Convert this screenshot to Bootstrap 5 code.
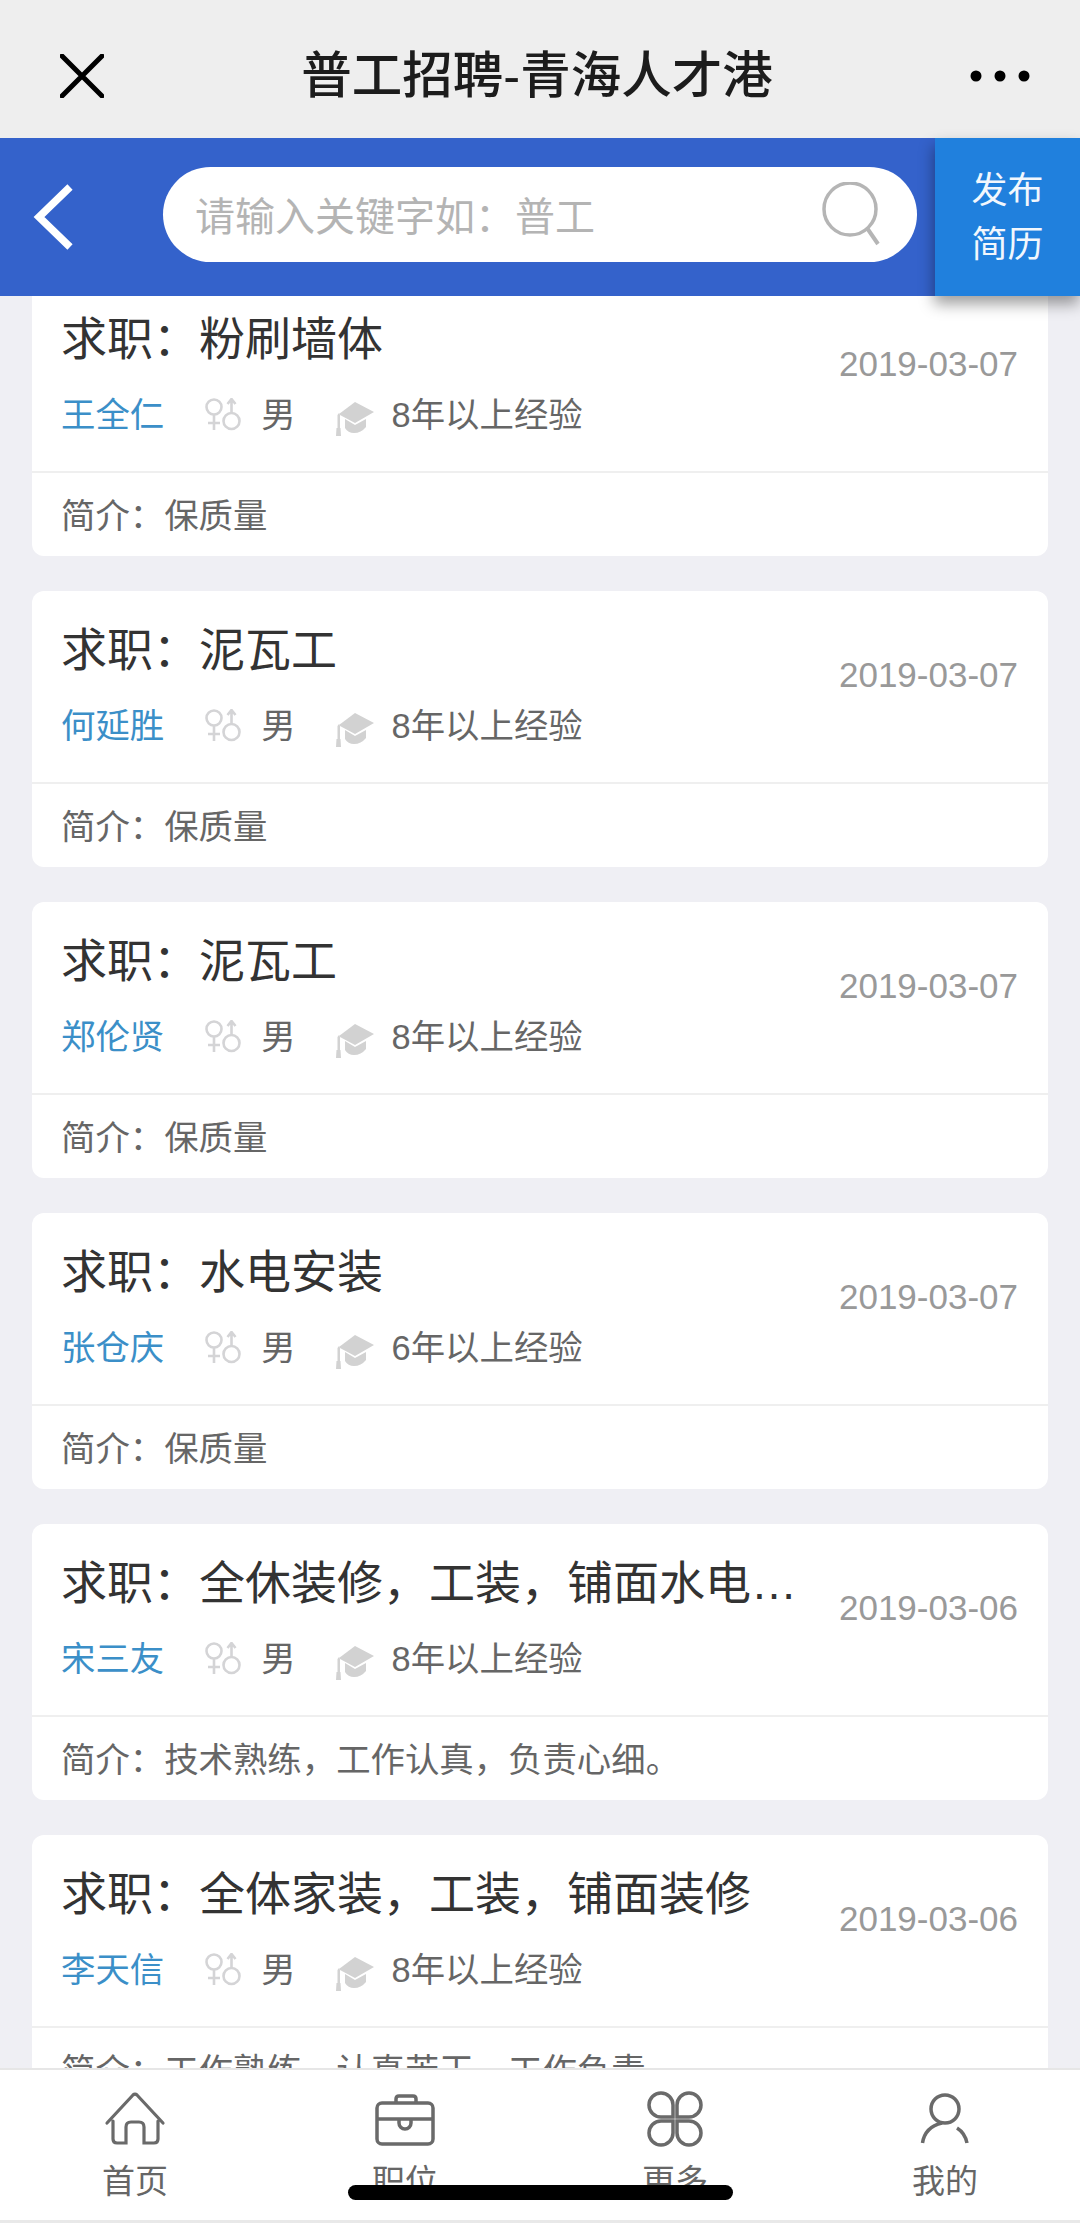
<!DOCTYPE html>
<html lang="zh-Hans">
<head>
  <meta charset="UTF-8">
  <title>普工招聘-青海人才港</title>
  <link href="https://cdn.jsdelivr.net/npm/bootstrap@5.3.3/dist/css/bootstrap.min.css" rel="stylesheet">
  <style>
    html, body { height: 2223px; }
    body { width: 1080px; overflow: hidden; background: #efeff4; font-family: "Liberation Sans", "Noto Sans CJK SC", sans-serif; color: #333; }
    .app-shell { height: 2223px; position: relative; }
    .wx-bar { height: 138px; background: #eeeeee; padding: 13px 50px 0 60px; }
    .wx-title { font-size: 50.5px; font-weight: 500; color: #1c1c1c; line-height: 1.1; }
    .search-head { height: 158px; background: #3462cb; position: relative; z-index: 2; }
    .back-slot { width: 163px; padding-left: 33px; }
    .search-wrap { padding-bottom: 6px; }
    .search-pill { width: 754px; height: 95px; background: #fff; border-radius: 48px; padding: 0 36px 0 32px; }
    .search-hint { font-size: 40px; color: #b4b4b4; line-height: 1.2; padding-top: 6px; }
    .publish-btn { width: 145px; margin-left: auto; background: #2080dd; color: #f2f7fd; font-size: 36px; line-height: 54px; box-shadow: -1px 8px 14px rgba(0, 0, 0, .38); text-align: center; padding-top: 1px; }
    .job-scroll { height: 1772px; overflow: hidden; padding: 0 32px; }
    .job-list { margin-top: -16px; gap: 35px; }
    .job-card { height: 276px; border: 0; border-radius: 12px; background: #fff; flex-shrink: 0; }
    .job-head { height: 191px; padding: 0 30px 0 29px; position: relative; }
    .job-top { padding-top: 24px; }
    .job-name { font-size: 46px; line-height: 70px; color: #333; }
    .job-date { font-size: 35px; line-height: 40px; color: #999; margin-top: 40px; margin-left: 40px; flex-shrink: 0; }
    .job-meta { margin-top: 9px; font-size: 34.4px; line-height: 44px; color: #666; }
    .who { color: #3b8fc8; margin-right: 40px; }
    .gender-ico { width: 37px; height: 34px; margin-right: 20px; }
    .sex-txt { margin-right: 38px; }
    .cap-ico { width: 40px; height: 36px; margin-right: 18px; margin-top: 8px; }
    .job-intro { border-top: 2px solid #efefef; height: 85px; padding: 0 29px; font-size: 34.4px; color: #666; line-height: 86px; }
    .tab-bar { height: 155px; background: #fff; border-top: 2px solid #e6e6e6; border-bottom: 3px solid #e9e9e9; position: relative; z-index: 3; }
    .tab-item { width: 270px; color: #666; font-size: 33px; line-height: 40px; padding-top: 21px; }
    .tab-ico { height: 60px; width: 64px; margin-bottom: 11px; }
    .home-pill { position: absolute; left: 348px; top: 2185px; width: 385px; height: 15px; background: #000; border-radius: 8px; z-index: 4; }
  </style>
</head>
<body>
  <div class="app-shell d-flex flex-column">
    <div class="wx-bar d-flex align-items-center justify-content-between flex-shrink-0">
      <svg width="44" height="44" viewBox="0 0 44 44"><path d="M2 2 42 42M42 2 2 42" stroke="#000" stroke-width="5" stroke-linecap="round"/></svg>
      <div class="wx-title">普工招聘-青海人才港</div>
      <svg width="60" height="12" viewBox="0 0 60 12"><circle cx="6" cy="6" r="5.5"/><circle cx="30" cy="6" r="5.5"/><circle cx="54" cy="6" r="5.5"/></svg>
    </div>

    <div class="search-head d-flex align-items-stretch flex-shrink-0">
      <div class="back-slot d-flex align-items-center">
        <svg width="42" height="66" viewBox="0 0 42 66"><path d="M37 3 6 33 37 63" fill="none" stroke="#fff" stroke-width="7.500"/></svg>
      </div>
      <div class="search-wrap d-flex align-items-center">
        <div class="search-pill d-flex align-items-center justify-content-between">
          <span class="search-hint">请输入关键字如：普工</span>
          <svg width="60" height="64" viewBox="0 0 60 64"><circle cx="29" cy="27" r="26" fill="none" stroke="#b5b5b5" stroke-width="3.5"/><path d="M46 46 57 62" stroke="#b5b5b5" stroke-width="4"/></svg>
        </div>
      </div>
      <div class="publish-btn d-flex flex-column justify-content-center">
        <span>发布</span>
        <span>简历</span>
      </div>
    </div>

    <div class="job-scroll">
      <div class="job-list d-flex flex-column" id="job-list"></div>
    </div>

    <div class="tab-bar d-flex flex-shrink-0">
      <div class="tab-item d-flex flex-column align-items-center">
        <svg class="tab-ico" viewBox="0 0 64 60"><path d="M4 32 30 4Q32 2 34 4L60 32M10 30V48Q10 52 14 52H23V36Q23 31 28 31H36Q41 31 41 36V52H51Q55 52 55 48V30" fill="none" stroke="#6a6a6a" stroke-width="3.2" stroke-linecap="round"/></svg>
        <span>首页</span>
      </div>
      <div class="tab-item d-flex flex-column align-items-center">
        <svg class="tab-ico" viewBox="0 0 64 60"><g fill="none" stroke="#6a6a6a" stroke-width="3.5"><rect x="4" y="12" width="56" height="41" rx="5"/><path d="M23 12V8Q23 5 26 5H40Q43 5 43 8V12M4 28H60M26 29V32A6 6 0 0 0 38 32V29"/></g></svg>
        <span>职位</span>
      </div>
      <div class="tab-item d-flex flex-column align-items-center">
        <svg class="tab-ico" viewBox="0 0 64 60"><g fill="none" stroke="#6a6a6a" stroke-width="3.5"><path d="M30 26H18A12 12 0 1 1 30 14Z"/><path d="M34 26H46A12 12 0 1 0 34 14Z"/><path d="M30 30H18A12 12 0 1 0 30 42Z"/><path d="M34 30H46A12 12 0 1 1 34 42Z"/></g></svg>
        <span>更多</span>
      </div>
      <div class="tab-item d-flex flex-column align-items-center">
        <svg class="tab-ico" viewBox="0 0 64 60"><g fill="none" stroke="#6a6a6a" stroke-width="3.5"><circle cx="32" cy="18" r="14"/><path d="M9.500 52Q12 36 29 32M44 37Q52 42 54 52"/></g></svg>
        <span>我的</span>
      </div>
    </div>
    <div class="home-pill"></div>
  </div>

  <script>
    const jobs = [
      { title: '粉刷墙体', name: '王全仁', years: 8, date: '2019-03-07', intro: '保质量' },
      { title: '泥瓦工', name: '何延胜', years: 8, date: '2019-03-07', intro: '保质量' },
      { title: '泥瓦工', name: '郑伦贤', years: 8, date: '2019-03-07', intro: '保质量' },
      { title: '水电安装', name: '张仓庆', years: 6, date: '2019-03-07', intro: '保质量' },
      { title: '全休装修，工装，铺面水电安装', name: '宋三友', years: 8, date: '2019-03-06', intro: '技术熟练，工作认真，负责心细。' },
      { title: '全体家装，工装，铺面装修', name: '李天信', years: 8, date: '2019-03-06', intro: '工作熟练，认真苦干，工作负责' }
    ];
    const genderIcon = `<svg class="gender-ico" viewBox="0 0 37 34"><g fill="none" stroke="#d4d4d6" stroke-width="2.6"><circle cx="10" cy="9" r="7.500"/><path d="M10 17V32M4 25H16"/><circle cx="27.500" cy="23" r="8"/><path d="M27.500 15V2M23.500 6 27.500 1 31.500 6"/></g></svg>`;
    const capIcon = `<svg class="cap-ico" viewBox="0 0 40 36"><path fill="#d2d2d2" d="M21 1 40 11 21 22 6 14 5 13ZM11 18 21 24 32 18V26Q27 32 20 32 14 32 11 27Z"/><path fill="#d2d2d2" d="M5 12 6 14V27H3.500V14ZM2.500 27H6.500L7 35H2Z"/></svg>`;
    const list = document.getElementById('job-list');
    jobs.forEach(job => {
      const card = document.createElement('div');
      card.className = 'card job-card';
      card.innerHTML = `
        <div class="job-head">
          <div class="d-flex job-top">
            <div class="job-name flex-grow-1 text-truncate">求职：${job.title}</div>
            <div class="job-date">${job.date}</div>
          </div>
          <div class="d-flex align-items-center job-meta">
            <span class="who">${job.name}</span>
            ${genderIcon}
            <span class="sex-txt">男</span>
            ${capIcon}
            <span>${job.years}年以上经验</span>
          </div>
        </div>
        <div class="job-intro">简介：${job.intro}</div>
      `;
      list.appendChild(card);
    });
  </script>
  <script src="https://cdn.jsdelivr.net/npm/bootstrap@5.3.3/dist/js/bootstrap.bundle.min.js"></script>
</body>
</html>
